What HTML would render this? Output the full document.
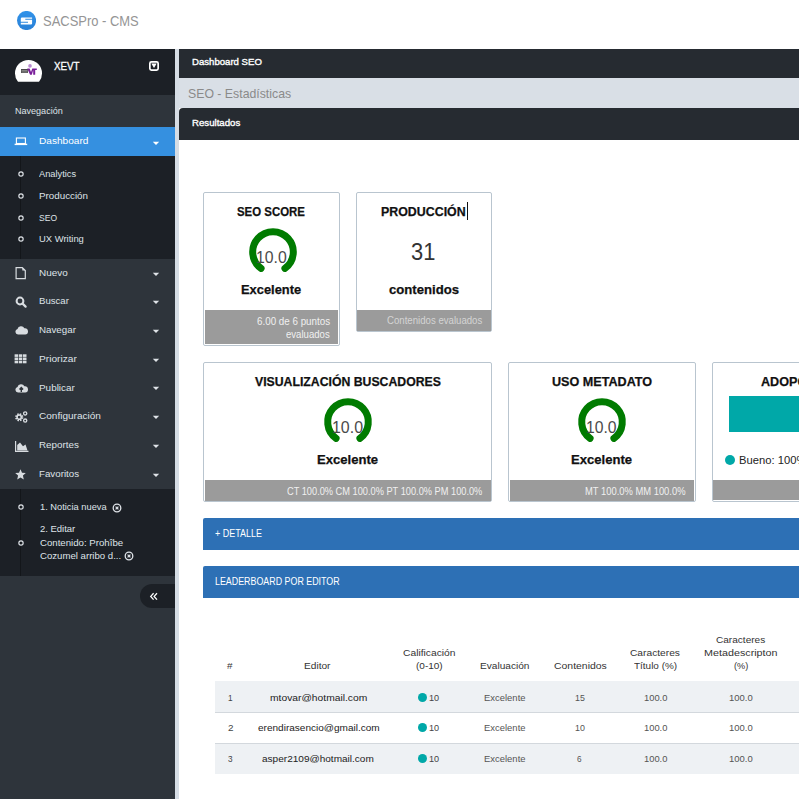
<!DOCTYPE html><html><head><meta charset="utf-8"><style>
html,body{margin:0;padding:0;width:799px;height:799px;overflow:hidden;background:#fff;}
body{position:relative;font-family:"Liberation Sans",sans-serif;}
body div, body svg{position:absolute;}
</style></head><body>
<svg style="left:17px;top:11px" width="19" height="19" viewBox="17 11 19 19"><defs><linearGradient id="lg" x1="0" y1="0" x2="0" y2="1"><stop offset="0" stop-color="#3093ea"/><stop offset="1" stop-color="#2a80d6"/></linearGradient></defs><circle cx="26.55" cy="20.5" r="9.55" fill="url(#lg)"/><path d="M22 17.4 H32.1 V18.8 H25.3 V19.7 H32.1 V23.4 Q32.1 24.4 31 24.4 H20.8 V22.7 H28 V21.7 H20.8 V18.6 Q20.8 17.4 22 17.4 Z" fill="#fff"/></svg>
<div style="left:42.60px;top:12.58px;font-size:14.6px;line-height:17.52px;color:#959595;font-weight:normal;white-space:nowrap;transform:scaleX(0.8879);transform-origin:0 0;">SACSPro - CMS</div>
<div style="left:0px;top:49px;width:175px;height:750px;background:#2e343b;"></div>
<div style="left:0px;top:49px;width:175px;height:46px;background:#1c2026;"></div>
<div style="left:175px;top:49px;width:4px;height:750px;background:#d6dde5;"></div>
<svg style="left:14px;top:59px" width="30" height="24" viewBox="14 59 30 24"><defs><clipPath id="av"><rect x="14" y="59" width="30" height="22.8"/></clipPath></defs><circle cx="28.5" cy="73.4" r="13.5" fill="#fff" clip-path="url(#av)"/><path d="M21 69 H28 V73 H21 Z" fill="#4a4a4a"/><path d="M21.5 70.6 H27.5 M21.5 72 H27.5" stroke="#ccc" stroke-width="0.5"/><path d="M27.2 68.4 H29.6 L31 72 L32.3 68.4 H36.8 V70 H35.2 V74.8 H33.2 V70 L31.8 74.8 H30.1 Z" fill="#7a1e9a"/><circle cx="30" cy="65.9" r="1.8" fill="#b78ad0"/></svg>
<div style="left:54.00px;top:59.38px;font-size:11.8px;line-height:14.16px;color:#fff;font-weight:normal;white-space:nowrap;transform:scaleX(0.8299);transform-origin:0 0;-webkit-text-stroke:0.3px #fff;">XEVT</div>
<svg style="left:147px;top:59px" width="14" height="14" viewBox="147 59 14 14"><rect x="149.85" y="61.85" width="8.3" height="8.3" rx="1.6" fill="none" stroke="#fff" stroke-width="1.7"/><path d="M151.3 63.4 H156.7 L154 67.9 Z" fill="#fff"/></svg>
<div style="left:15.25px;top:105.15px;font-size:9.4px;line-height:11.28px;color:#dfe3e8;font-weight:normal;white-space:nowrap;transform:scaleX(0.9635);transform-origin:0 0;">Navegación</div>
<div style="left:0px;top:127px;width:175px;height:29px;background:#3590e0;"></div>
<svg style="left:14px;top:136px" width="14" height="10" viewBox="0 0 14 10"><rect x="2.4" y="2" width="9" height="5.5" fill="none" stroke="#fff" stroke-width="1.1"/><rect x="0.6" y="7.7" width="12.6" height="1.4" fill="#fff"/></svg>
<div style="left:38.75px;top:135.21px;font-size:9.6px;line-height:11.52px;color:#fff;font-weight:normal;white-space:nowrap;transform:scaleX(1.0515);transform-origin:0 0;">Dashboard</div>
<svg style="left:152px;top:140.5px" width="8" height="5" viewBox="0 0 8 5"><path d="M0.8 0.8 H7.2 L4 3.9 Z" fill="#fff"/></svg>
<div style="left:0px;top:156px;width:175px;height:103px;background:#1c2026;"></div>
<div style="left:20px;top:156px;width:1px;height:103px;background:#13161a;"></div>
<svg style="left:17.00px;top:169.75px" width="8" height="8" viewBox="0 0 8 8"><circle cx="4" cy="4" r="2.15" fill="none" stroke="#dfe3e8" stroke-width="1.15"/></svg>
<div style="left:39.00px;top:169.39px;font-size:9.2px;line-height:11.04px;color:#dfe3e8;font-weight:normal;white-space:nowrap;transform:scaleX(1.0089);transform-origin:0 0;">Analytics</div>
<svg style="left:17.00px;top:191.60px" width="8" height="8" viewBox="0 0 8 8"><circle cx="4" cy="4" r="2.15" fill="none" stroke="#dfe3e8" stroke-width="1.15"/></svg>
<div style="left:39.00px;top:190.79px;font-size:9.2px;line-height:11.04px;color:#dfe3e8;font-weight:normal;white-space:nowrap;transform:scaleX(1.0664);transform-origin:0 0;">Producción</div>
<svg style="left:17.00px;top:213.50px" width="8" height="8" viewBox="0 0 8 8"><circle cx="4" cy="4" r="2.15" fill="none" stroke="#dfe3e8" stroke-width="1.15"/></svg>
<div style="left:39.00px;top:212.59px;font-size:9.2px;line-height:11.04px;color:#dfe3e8;font-weight:normal;white-space:nowrap;transform:scaleX(0.9296);transform-origin:0 0;">SEO</div>
<svg style="left:17.00px;top:235.40px" width="8" height="8" viewBox="0 0 8 8"><circle cx="4" cy="4" r="2.15" fill="none" stroke="#dfe3e8" stroke-width="1.15"/></svg>
<div style="left:39.00px;top:234.19px;font-size:9.2px;line-height:11.04px;color:#dfe3e8;font-weight:normal;white-space:nowrap;transform:scaleX(1.0258);transform-origin:0 0;">UX Writing</div>
<div style="left:38.80px;top:266.70px;font-size:9.4px;line-height:11.28px;color:#dfe3e8;font-weight:normal;white-space:nowrap;transform:scaleX(1.0582);transform-origin:0 0;">Nuevo</div>
<svg style="left:152px;top:271.5px" width="8" height="5" viewBox="0 0 8 5"><path d="M0.8 0.8 H7.2 L4 3.9 Z" fill="#dfe3e8"/></svg>
<div style="left:38.80px;top:295.42px;font-size:9.4px;line-height:11.28px;color:#dfe3e8;font-weight:normal;white-space:nowrap;transform:scaleX(1.0222);transform-origin:0 0;">Buscar</div>
<svg style="left:152px;top:300.2px" width="8" height="5" viewBox="0 0 8 5"><path d="M0.8 0.8 H7.2 L4 3.9 Z" fill="#dfe3e8"/></svg>
<div style="left:38.80px;top:324.14px;font-size:9.4px;line-height:11.28px;color:#dfe3e8;font-weight:normal;white-space:nowrap;transform:scaleX(1.0421);transform-origin:0 0;">Navegar</div>
<svg style="left:152px;top:328.9px" width="8" height="5" viewBox="0 0 8 5"><path d="M0.8 0.8 H7.2 L4 3.9 Z" fill="#dfe3e8"/></svg>
<div style="left:38.80px;top:352.86px;font-size:9.4px;line-height:11.28px;color:#dfe3e8;font-weight:normal;white-space:nowrap;transform:scaleX(1.0840);transform-origin:0 0;">Priorizar</div>
<svg style="left:152px;top:357.7px" width="8" height="5" viewBox="0 0 8 5"><path d="M0.8 0.8 H7.2 L4 3.9 Z" fill="#dfe3e8"/></svg>
<div style="left:38.80px;top:381.58px;font-size:9.4px;line-height:11.28px;color:#dfe3e8;font-weight:normal;white-space:nowrap;transform:scaleX(1.0578);transform-origin:0 0;">Publicar</div>
<svg style="left:152px;top:386.4px" width="8" height="5" viewBox="0 0 8 5"><path d="M0.8 0.8 H7.2 L4 3.9 Z" fill="#dfe3e8"/></svg>
<div style="left:38.80px;top:410.30px;font-size:9.4px;line-height:11.28px;color:#dfe3e8;font-weight:normal;white-space:nowrap;transform:scaleX(1.0706);transform-origin:0 0;">Configuración</div>
<svg style="left:152px;top:415.1px" width="8" height="5" viewBox="0 0 8 5"><path d="M0.8 0.8 H7.2 L4 3.9 Z" fill="#dfe3e8"/></svg>
<div style="left:38.80px;top:439.02px;font-size:9.4px;line-height:11.28px;color:#dfe3e8;font-weight:normal;white-space:nowrap;transform:scaleX(1.0482);transform-origin:0 0;">Reportes</div>
<svg style="left:152px;top:443.8px" width="8" height="5" viewBox="0 0 8 5"><path d="M0.8 0.8 H7.2 L4 3.9 Z" fill="#dfe3e8"/></svg>
<div style="left:38.80px;top:467.74px;font-size:9.4px;line-height:11.28px;color:#dfe3e8;font-weight:normal;white-space:nowrap;transform:scaleX(1.0395);transform-origin:0 0;">Favoritos</div>
<svg style="left:152px;top:472.5px" width="8" height="5" viewBox="0 0 8 5"><path d="M0.8 0.8 H7.2 L4 3.9 Z" fill="#dfe3e8"/></svg>
<svg style="left:15px;top:267px" width="12" height="13" viewBox="0 0 12 13"><path d="M1.1 0.7 H7.3 L10.3 3.6 V11.6 H1.1 Z" fill="none" stroke="#d8dce0" stroke-width="1.2"/><path d="M7.3 0.7 V3.6 H10.3 Z" fill="#d8dce0"/></svg>
<svg style="left:15px;top:296px" width="12" height="12" viewBox="0 0 12 12"><circle cx="5" cy="5" r="3.4" fill="none" stroke="#d8dce0" stroke-width="2"/><path d="M7.6 7.6 L10.6 10.6" stroke="#d8dce0" stroke-width="2.2" stroke-linecap="round"/></svg>
<svg style="left:14.5px;top:325px" width="13" height="10" viewBox="0 0 13 10"><path d="M3 9.6 A2.8 2.8 0 0 1 2.5 4.1 A3.7 3.7 0 0 1 9.4 3.3 A3 3 0 0 1 10.2 9.6 Z" fill="#d8dce0"/></svg>
<svg style="left:14px;top:354px" width="13" height="10" viewBox="0 0 13 10"><rect x="0.6" y="0.3" width="3.5" height="2.6" fill="#d8dce0"/><rect x="4.8" y="0.3" width="3.5" height="2.6" fill="#d8dce0"/><rect x="9.0" y="0.3" width="3.5" height="2.6" fill="#d8dce0"/><rect x="0.6" y="3.5" width="3.5" height="2.6" fill="#d8dce0"/><rect x="4.8" y="3.5" width="3.5" height="2.6" fill="#d8dce0"/><rect x="9.0" y="3.5" width="3.5" height="2.6" fill="#d8dce0"/><rect x="0.6" y="6.7" width="3.5" height="2.6" fill="#d8dce0"/><rect x="4.8" y="6.7" width="3.5" height="2.6" fill="#d8dce0"/><rect x="9.0" y="6.7" width="3.5" height="2.6" fill="#d8dce0"/></svg>
<svg style="left:15px;top:383px" width="13" height="10" viewBox="0 0 13 10"><path d="M3 9.6 A2.8 2.8 0 0 1 2.5 4.1 A3.7 3.7 0 0 1 9.4 3.3 A3 3 0 0 1 10.2 9.6 Z" fill="#d8dce0"/><path d="M6.3 9 V5 M4.5 6.5 L6.3 4.5 L8.1 6.5" stroke="#2e343b" stroke-width="1.4" fill="none"/></svg>
<svg style="left:15px;top:411px" width="13" height="12" viewBox="0 0 13 12"><circle cx="4.2" cy="6.2" r="2.9" fill="none" stroke="#d8dce0" stroke-width="2.4" stroke-dasharray="1.4 0.9"/><circle cx="4.2" cy="6.2" r="2.1" fill="none" stroke="#d8dce0" stroke-width="1.5"/><circle cx="10.2" cy="2.4" r="1.6" fill="none" stroke="#d8dce0" stroke-width="1.3"/><circle cx="10.2" cy="9.6" r="1.6" fill="none" stroke="#d8dce0" stroke-width="1.3"/></svg>
<svg style="left:14.6px;top:440.5px" width="14" height="11" viewBox="0 0 14 11"><path d="M0.6 0 V10.3 H13.5" fill="none" stroke="#d8dce0" stroke-width="1.2"/><path d="M2.2 9.6 V4 L5 1.6 L8 5.2 L10.5 3.6 L12.5 9.6 Z" fill="#d8dce0"/></svg>
<svg style="left:15px;top:469px" width="11" height="11" viewBox="0 0 11 11"><path d="M5.5 0.3 L7 3.8 L10.8 4.1 L7.9 6.6 L8.8 10.4 L5.5 8.4 L2.2 10.4 L3.1 6.6 L0.2 4.1 L4 3.8 Z" fill="#d8dce0"/></svg>
<div style="left:0px;top:489px;width:175px;height:87px;background:#1c2026;"></div>
<div style="left:20px;top:489px;width:1px;height:87px;background:#13161a;"></div>
<svg style="left:17.00px;top:503.00px" width="8" height="8" viewBox="0 0 8 8"><circle cx="4" cy="4" r="2.15" fill="none" stroke="#dfe3e8" stroke-width="1.15"/></svg>
<div style="left:39.60px;top:502.39px;font-size:9.2px;line-height:11.04px;color:#dfe3e8;font-weight:normal;white-space:nowrap;transform:scaleX(1.0109);transform-origin:0 0;">1. Noticia nueva</div>
<svg style="left:111.5px;top:502.7px" width="10" height="10" viewBox="0 0 10 10"><circle cx="5" cy="5" r="3.8" fill="none" stroke="#dfe3e8" stroke-width="1.3"/><path d="M3.6 3.6 L6.4 6.4 M6.4 3.6 L3.6 6.4" stroke="#dfe3e8" stroke-width="1.2"/></svg>
<svg style="left:17.00px;top:539.00px" width="8" height="8" viewBox="0 0 8 8"><circle cx="4" cy="4" r="2.15" fill="none" stroke="#dfe3e8" stroke-width="1.15"/></svg>
<div style="left:39.60px;top:523.79px;font-size:9.2px;line-height:11.04px;color:#dfe3e8;font-weight:normal;white-space:nowrap;transform:scaleX(1.0306);transform-origin:0 0;">2. Editar</div>
<div style="left:39.60px;top:537.79px;font-size:9.2px;line-height:11.04px;color:#dfe3e8;font-weight:normal;white-space:nowrap;transform:scaleX(1.0498);transform-origin:0 0;">Contenido: Prohîbe</div>
<div style="left:39.60px;top:551.29px;font-size:9.2px;line-height:11.04px;color:#dfe3e8;font-weight:normal;white-space:nowrap;transform:scaleX(1.0459);transform-origin:0 0;">Cozumel arribo d...</div>
<svg style="left:123.69999999999999px;top:551.4px" width="10" height="10" viewBox="0 0 10 10"><circle cx="5" cy="5" r="3.8" fill="none" stroke="#dfe3e8" stroke-width="1.3"/><path d="M3.6 3.6 L6.4 6.4 M6.4 3.6 L3.6 6.4" stroke="#dfe3e8" stroke-width="1.2"/></svg>
<div style="left:140px;top:584px;width:35px;height:24px;background:#1c2026;border-radius:12px 0 0 12px"></div>
<svg style="left:149px;top:592px" width="10" height="10" viewBox="0 0 10 10"><path d="M4.6 1.2 L1.7 4.4 L4.6 7.6 M8 1.2 L5.1 4.4 L8 7.6" fill="none" stroke="#fff" stroke-width="1.3"/></svg>
<div style="left:179px;top:49px;width:620px;height:29px;background:#262b31;"></div>
<div style="left:191.50px;top:56.50px;font-size:9.3px;line-height:11.16px;color:#fff;font-weight:normal;white-space:nowrap;transform:scaleX(1.0316);transform-origin:0 0;-webkit-text-stroke:0.35px #fff;">Dashboard SEO</div>
<div style="left:179px;top:78px;width:620px;height:30px;background:#d9dfe6;"></div>
<div style="left:188.00px;top:86.00px;font-size:13px;line-height:15.6px;color:#8a8a8a;font-weight:normal;white-space:nowrap;transform:scaleX(0.9453);transform-origin:0 0;">SEO - Estadísticas</div>
<div style="left:179px;top:108px;width:620px;height:32px;background:#262b31;border-top-left-radius:4px;"></div>
<div style="left:191.50px;top:118.40px;font-size:9.3px;line-height:11.16px;color:#fff;font-weight:normal;white-space:nowrap;transform:scaleX(1.0371);transform-origin:0 0;-webkit-text-stroke:0.35px #fff;">Resultados</div>
<div style="left:203px;top:192px;width:135px;height:152px;border:1px solid #b9c5cf;border-radius:2px;background:#fff"></div>
<div style="left:205px;top:310px;width:133px;height:34px;background:#9b9b9b;"></div>
<div style="left:237.40px;top:205.07px;font-size:12.6px;line-height:15.12px;color:#111;font-weight:bold;white-space:nowrap;transform:scaleX(0.9076);transform-origin:0 0;-webkit-text-stroke:0.25px #111;">SEO SCORE</div>
<svg style="left:243px;top:222px" width="60" height="60" viewBox="243 222 60 60"><path d="M261.07 268.42 A20.3 20.3 0 1 1 284.93 268.42" fill="none" stroke="#007b00" stroke-width="7" stroke-linecap="round"/></svg>
<div style="left:256.03px;top:247.77px;font-size:16.3px;line-height:19.56px;color:#4a4a4a;font-weight:normal;white-space:nowrap;transform:scaleX(0.9695);transform-origin:0 0;">10.0</div>
<div style="left:241.00px;top:281.68px;font-size:12.8px;line-height:15.36px;color:#111;font-weight:bold;white-space:nowrap;transform:scaleX(1.0061);transform-origin:0 0;-webkit-text-stroke:0.25px #111;">Excelente</div>
<div style="left:257.00px;top:315.65px;font-size:10.2px;line-height:12.24px;color:#f0f0f0;font-weight:normal;white-space:nowrap;transform:scaleX(0.9629);transform-origin:0 0;">6.00 de 6 puntos</div>
<div style="left:286.40px;top:329.25px;font-size:10.2px;line-height:12.24px;color:#f0f0f0;font-weight:normal;white-space:nowrap;transform:scaleX(0.9406);transform-origin:0 0;">evaluados</div>
<div style="left:356px;top:192px;width:134px;height:138px;border:1px solid #b9c5cf;border-radius:2px;background:#fff"></div>
<div style="left:357px;top:310px;width:134px;height:21px;background:#9b9b9b;"></div>
<div style="left:381.40px;top:205.07px;font-size:12.6px;line-height:15.12px;color:#111;font-weight:bold;white-space:nowrap;transform:scaleX(0.9841);transform-origin:0 0;-webkit-text-stroke:0.25px #111;">PRODUCCIÓN</div>
<div style="left:467px;top:202px;width:1px;height:18px;background:#111;"></div>
<div style="left:410.80px;top:238.63px;font-size:23px;line-height:27.6px;color:#333;font-weight:normal;white-space:nowrap;transform:scaleX(0.9519);transform-origin:0 0;">31</div>
<div style="left:389.00px;top:282.08px;font-size:12.8px;line-height:15.36px;color:#111;font-weight:bold;white-space:nowrap;transform:scaleX(1.0274);transform-origin:0 0;-webkit-text-stroke:0.25px #111;">contenidos</div>
<div style="left:387.40px;top:315.25px;font-size:10.2px;line-height:12.24px;color:#d4d4d4;font-weight:normal;white-space:nowrap;transform:scaleX(0.9452);transform-origin:0 0;">Contenidos evaluados</div>
<div style="left:203px;top:362px;width:287px;height:138px;border:1px solid #b9c5cf;border-radius:2px;background:#fff"></div>
<div style="left:205px;top:480px;width:286px;height:21px;background:#9b9b9b;"></div>
<div style="left:254.90px;top:375.07px;font-size:12.6px;line-height:15.12px;color:#111;font-weight:bold;white-space:nowrap;transform:scaleX(0.9732);transform-origin:0 0;-webkit-text-stroke:0.25px #111;">VISUALIZACIÓN BUSCADORES</div>
<svg style="left:318px;top:392px" width="60" height="60" viewBox="318 392 60 60"><path d="M336.07 438.42 A20.3 20.3 0 1 1 359.93 438.42" fill="none" stroke="#007b00" stroke-width="7" stroke-linecap="round"/></svg>
<div style="left:332.02px;top:417.77px;font-size:16.3px;line-height:19.56px;color:#4a4a4a;font-weight:normal;white-space:nowrap;transform:scaleX(0.9793);transform-origin:0 0;">10.0</div>
<div style="left:317.00px;top:452.18px;font-size:12.8px;line-height:15.36px;color:#111;font-weight:bold;white-space:nowrap;transform:scaleX(1.0229);transform-origin:0 0;-webkit-text-stroke:0.25px #111;">Excelente</div>
<div style="left:287.40px;top:485.95px;font-size:10.2px;line-height:12.24px;color:#f0f0f0;font-weight:normal;white-space:nowrap;transform:scaleX(0.9069);transform-origin:0 0;">CT 100.0% CM 100.0% PT 100.0% PM 100.0%</div>
<div style="left:508px;top:362px;width:186px;height:138px;border:1px solid #b9c5cf;border-radius:2px;background:#fff"></div>
<div style="left:510px;top:480px;width:184px;height:21px;background:#9b9b9b;"></div>
<div style="left:552.00px;top:375.07px;font-size:12.6px;line-height:15.12px;color:#111;font-weight:bold;white-space:nowrap;-webkit-text-stroke:0.25px #111;">USO METADATO</div>
<svg style="left:572px;top:392px" width="60" height="60" viewBox="572 392 60 60"><path d="M590.07 438.42 A20.3 20.3 0 1 1 613.93 438.42" fill="none" stroke="#007b00" stroke-width="7" stroke-linecap="round"/></svg>
<div style="left:586.43px;top:417.77px;font-size:16.3px;line-height:19.56px;color:#4a4a4a;font-weight:normal;white-space:nowrap;transform:scaleX(0.9663);transform-origin:0 0;">10.0</div>
<div style="left:571.00px;top:452.18px;font-size:12.8px;line-height:15.36px;color:#111;font-weight:bold;white-space:nowrap;transform:scaleX(1.0229);transform-origin:0 0;-webkit-text-stroke:0.25px #111;">Excelente</div>
<div style="left:585.40px;top:485.95px;font-size:10.2px;line-height:12.24px;color:#f0f0f0;font-weight:normal;white-space:nowrap;transform:scaleX(0.9211);transform-origin:0 0;">MT 100.0% MM 100.0%</div>
<div style="left:712px;top:362px;width:207px;height:138px;border:1px solid #b9c5cf;border-radius:2px;background:#fff"></div>
<div style="left:713px;top:480px;width:208px;height:20px;background:#9b9b9b;"></div>
<div style="left:761.00px;top:375.07px;font-size:12.6px;line-height:15.12px;color:#111;font-weight:bold;white-space:nowrap;-webkit-text-stroke:0.25px #111;">ADOPCIÓN</div>
<div style="left:729px;top:396px;width:200px;height:36px;background:#00a8a8;"></div>
<div style="left:725px;top:454.6px;width:10px;height:10px;border-radius:50%;background:#00a8a8"></div>
<div style="left:739.40px;top:453.79px;font-size:11px;line-height:13.2px;color:#222;font-weight:normal;white-space:nowrap;transform:scaleX(1.0200);transform-origin:0 0;">Bueno: 100%</div>
<div style="left:203px;top:518px;width:596px;height:32px;background:#2d70b5;border-radius:2px 0 0 0;"></div>
<div style="left:215.00px;top:527.36px;font-size:10.5px;line-height:12.6px;color:#fff;font-weight:normal;white-space:nowrap;transform:scaleX(0.8553);transform-origin:0 0;">+ DETALLE</div>
<div style="left:203px;top:566px;width:596px;height:32px;background:#2d70b5;border-radius:2px 0 0 0;"></div>
<div style="left:215.40px;top:575.36px;font-size:10.5px;line-height:12.6px;color:#fff;font-weight:normal;white-space:nowrap;transform:scaleX(0.8455);transform-origin:0 0;">LEADERBOARD POR EDITOR</div>
<div style="left:227.00px;top:660.03px;font-size:9.9px;line-height:11.88px;color:#333;font-weight:normal;white-space:nowrap;">#</div>
<div style="left:304.40px;top:660.03px;font-size:9.9px;line-height:11.88px;color:#333;font-weight:normal;white-space:nowrap;transform:scaleX(1.0261);transform-origin:0 0;">Editor</div>
<div style="left:403.00px;top:647.03px;font-size:9.9px;line-height:11.88px;color:#333;font-weight:normal;white-space:nowrap;transform:scaleX(1.0400);transform-origin:0 0;">Calificación</div>
<div style="left:416.00px;top:660.03px;font-size:9.9px;line-height:11.88px;color:#333;font-weight:normal;white-space:nowrap;transform:scaleX(1.0133);transform-origin:0 0;">(0-10)</div>
<div style="left:480.00px;top:660.03px;font-size:9.9px;line-height:11.88px;color:#333;font-weight:normal;white-space:nowrap;transform:scaleX(1.0247);transform-origin:0 0;">Evaluación</div>
<div style="left:553.60px;top:659.83px;font-size:9.9px;line-height:11.88px;color:#333;font-weight:normal;white-space:nowrap;transform:scaleX(1.0576);transform-origin:0 0;">Contenidos</div>
<div style="left:630.00px;top:646.73px;font-size:9.9px;line-height:11.88px;color:#333;font-weight:normal;white-space:nowrap;transform:scaleX(1.0340);transform-origin:0 0;">Caracteres</div>
<div style="left:634.00px;top:660.03px;font-size:9.9px;line-height:11.88px;color:#333;font-weight:normal;white-space:nowrap;transform:scaleX(1.0068);transform-origin:0 0;">Título (%)</div>
<div style="left:715.70px;top:633.53px;font-size:9.9px;line-height:11.88px;color:#333;font-weight:normal;white-space:nowrap;transform:scaleX(1.0195);transform-origin:0 0;">Caracteres</div>
<div style="left:704.00px;top:647.03px;font-size:9.9px;line-height:11.88px;color:#333;font-weight:normal;white-space:nowrap;transform:scaleX(1.0892);transform-origin:0 0;">Metadescripton</div>
<div style="left:733.50px;top:660.03px;font-size:9.9px;line-height:11.88px;color:#333;font-weight:normal;white-space:nowrap;transform:scaleX(0.9291);transform-origin:0 0;">(%)</div>
<div style="left:215px;top:681px;width:584px;height:31px;background:#eef1f4;"></div>
<div style="left:215px;top:712px;width:584px;height:1px;background:#d3d8dd;"></div>
<div style="left:215px;top:743px;width:584px;height:1px;background:#d3d8dd;"></div>
<div style="left:215px;top:744px;width:584px;height:30px;background:#eef1f4;"></div>
<div style="left:228.00px;top:692.03px;font-size:9.9px;line-height:11.88px;color:#444;font-weight:normal;white-space:nowrap;transform:scaleX(0.8333);transform-origin:0 0;">1</div>
<div style="left:269.50px;top:692.03px;font-size:9.9px;line-height:11.88px;color:#222;font-weight:normal;white-space:nowrap;transform:scaleX(1.0407);transform-origin:0 0;">mtovar@hotmail.com</div>
<div style="left:418px;top:693.1px;width:9px;height:9px;border-radius:50%;background:#00a8a8"></div>
<div style="left:429.40px;top:692.03px;font-size:9.9px;line-height:11.88px;color:#444;font-weight:normal;white-space:nowrap;transform:scaleX(0.9224);transform-origin:0 0;">10</div>
<div style="left:483.60px;top:692.03px;font-size:9.9px;line-height:11.88px;color:#555;font-weight:normal;white-space:nowrap;transform:scaleX(0.9573);transform-origin:0 0;">Excelente</div>
<div style="left:575.00px;top:692.03px;font-size:9.9px;line-height:11.88px;color:#555;font-weight:normal;white-space:nowrap;transform:scaleX(0.8963);transform-origin:0 0;">15</div>
<div style="left:643.50px;top:692.03px;font-size:9.9px;line-height:11.88px;color:#555;font-weight:normal;white-space:nowrap;transform:scaleX(0.9477);transform-origin:0 0;">100.0</div>
<div style="left:728.60px;top:692.03px;font-size:9.9px;line-height:11.88px;color:#555;font-weight:normal;white-space:nowrap;transform:scaleX(0.9596);transform-origin:0 0;">100.0</div>
<div style="left:228.00px;top:722.23px;font-size:9.9px;line-height:11.88px;color:#444;font-weight:normal;white-space:nowrap;">2</div>
<div style="left:257.50px;top:722.23px;font-size:9.9px;line-height:11.88px;color:#222;font-weight:normal;white-space:nowrap;transform:scaleX(1.0161);transform-origin:0 0;">erendirasencio@gmail.com</div>
<div style="left:418px;top:723.3px;width:9px;height:9px;border-radius:50%;background:#00a8a8"></div>
<div style="left:429.40px;top:722.23px;font-size:9.9px;line-height:11.88px;color:#444;font-weight:normal;white-space:nowrap;transform:scaleX(0.9224);transform-origin:0 0;">10</div>
<div style="left:483.60px;top:722.23px;font-size:9.9px;line-height:11.88px;color:#555;font-weight:normal;white-space:nowrap;transform:scaleX(0.9573);transform-origin:0 0;">Excelente</div>
<div style="left:575.00px;top:722.23px;font-size:9.9px;line-height:11.88px;color:#555;font-weight:normal;white-space:nowrap;transform:scaleX(0.8963);transform-origin:0 0;">10</div>
<div style="left:643.50px;top:722.23px;font-size:9.9px;line-height:11.88px;color:#555;font-weight:normal;white-space:nowrap;transform:scaleX(0.9477);transform-origin:0 0;">100.0</div>
<div style="left:728.60px;top:722.23px;font-size:9.9px;line-height:11.88px;color:#555;font-weight:normal;white-space:nowrap;transform:scaleX(0.9596);transform-origin:0 0;">100.0</div>
<div style="left:228.00px;top:753.03px;font-size:9.9px;line-height:11.88px;color:#444;font-weight:normal;white-space:nowrap;transform:scaleX(0.8333);transform-origin:0 0;">3</div>
<div style="left:262.40px;top:753.03px;font-size:9.9px;line-height:11.88px;color:#222;font-weight:normal;white-space:nowrap;transform:scaleX(1.0173);transform-origin:0 0;">asper2109@hotmail.com</div>
<div style="left:418px;top:754.1px;width:9px;height:9px;border-radius:50%;background:#00a8a8"></div>
<div style="left:429.40px;top:753.03px;font-size:9.9px;line-height:11.88px;color:#444;font-weight:normal;white-space:nowrap;transform:scaleX(0.9224);transform-origin:0 0;">10</div>
<div style="left:483.60px;top:753.03px;font-size:9.9px;line-height:11.88px;color:#555;font-weight:normal;white-space:nowrap;transform:scaleX(0.9573);transform-origin:0 0;">Excelente</div>
<div style="left:577.00px;top:753.03px;font-size:9.9px;line-height:11.88px;color:#555;font-weight:normal;white-space:nowrap;transform:scaleX(0.8333);transform-origin:0 0;">6</div>
<div style="left:643.50px;top:753.03px;font-size:9.9px;line-height:11.88px;color:#555;font-weight:normal;white-space:nowrap;transform:scaleX(0.9477);transform-origin:0 0;">100.0</div>
<div style="left:728.60px;top:753.03px;font-size:9.9px;line-height:11.88px;color:#555;font-weight:normal;white-space:nowrap;transform:scaleX(0.9596);transform-origin:0 0;">100.0</div>
</body></html>
